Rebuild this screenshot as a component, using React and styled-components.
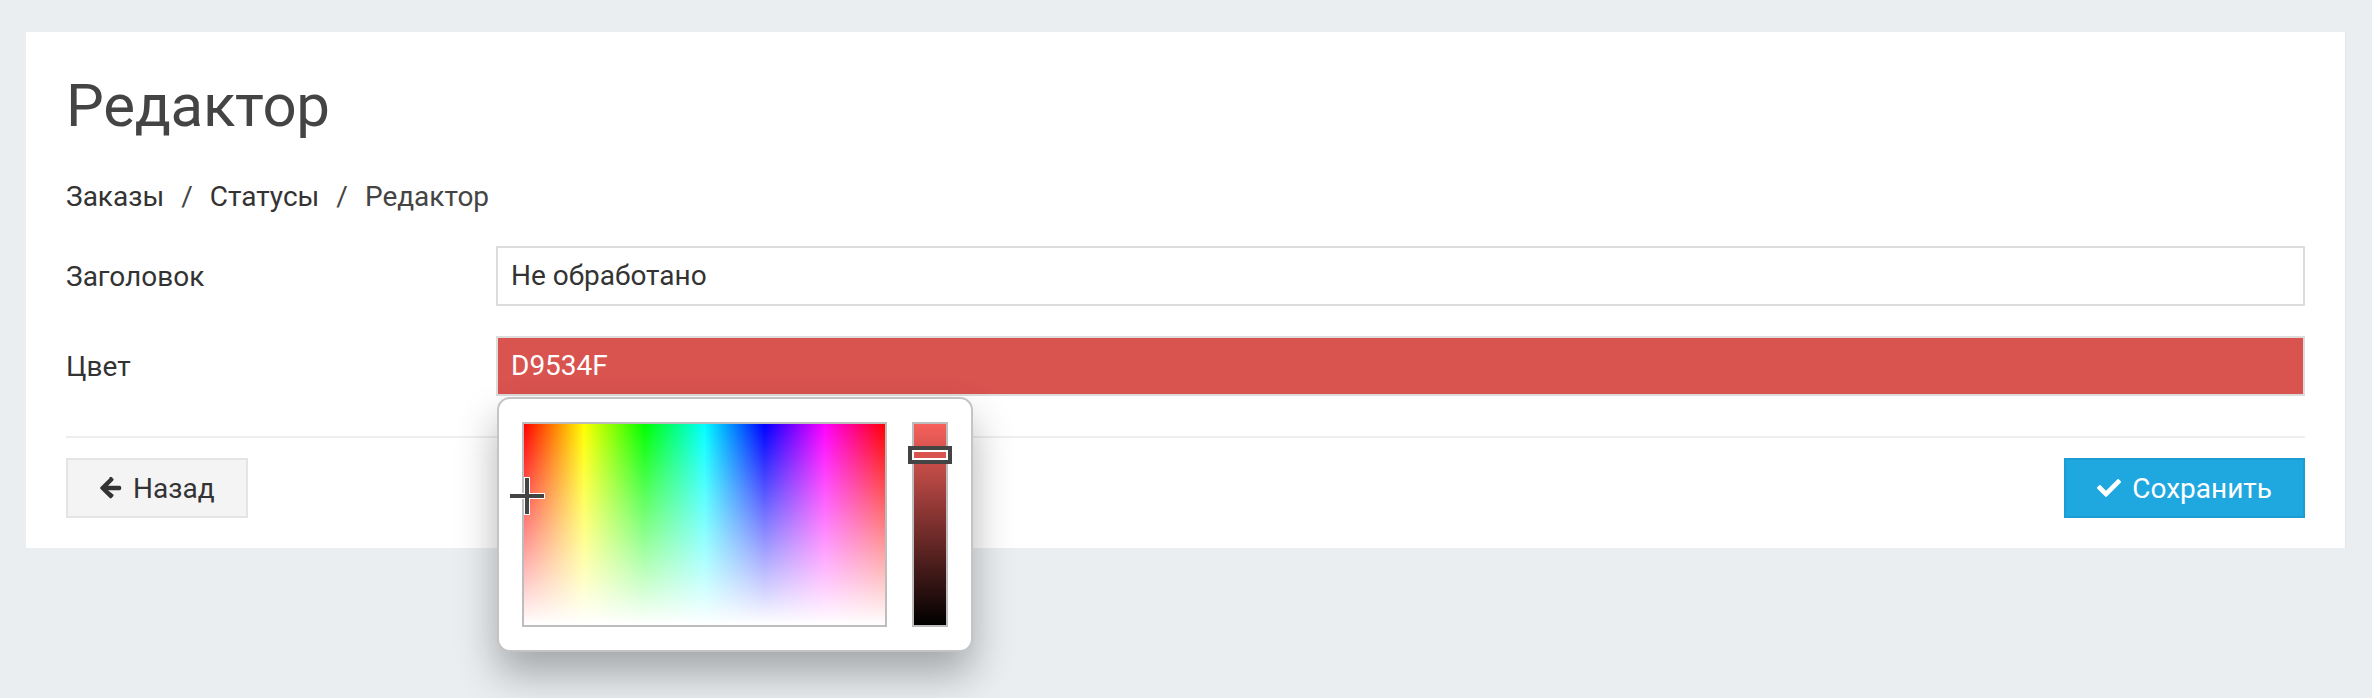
import React from "react";
import styled, { createGlobalStyle } from "styled-components";
import { FaCheck } from "react-icons/fa";

const Global = createGlobalStyle`
  html, body { margin: 0; padding: 0; background: #eaeef1; }
  body { font-family: Roboto, "Liberation Sans", Arial, sans-serif; color: #333; }
  * { box-sizing: border-box; }
`;

const Page = styled.div`
  min-height: 698px;
  padding: 32px 26px 0 26px;
`;

const Panel = styled.div`
  background: #fff;
  padding: 41px 40px 30px 40px;
  border-right: 1px solid #e3e6e9;
`;

const Title = styled.h1`
  margin: 0;
  font-size: 60px;
  line-height: 66px;
  font-weight: 400;
  color: #444;
  letter-spacing: -0.3px;
`;

const Crumbs = styled.nav`
  margin-top: 38px;
  display: flex;
  font-size: 28px;
  line-height: 40px;
  color: #333;
`;

const Crumb = styled.span`
  color: ${(p) => (p.$active ? "#444" : "#333")};
`;

const Sep = styled.span`
  padding: 0 17px;
  color: #444;
`;

const Form = styled.div`
  margin-top: 29px;
  display: grid;
  grid-template-columns: 430px 1fr;
  row-gap: 30px;
  align-items: center;
`;

const Label = styled.label`
  font-size: 28px;
  color: #333;
`;

const Field = styled.div`
  position: relative;
`;

const Input = styled.div`
  height: 60px;
  border: 2px solid #dcdcdc;
  background: ${(p) => p.$bg || "#fff"};
  color: ${(p) => p.$fg || "#333"};
  font-size: 28px;
  line-height: 56px;
  padding: 0 13px;
`;

const Divider = styled.hr`
  margin: 40px 0 0 0;
  border: 0;
  border-top: 2px solid #eee;
`;

const Actions = styled.div`
  margin-top: 20px;
  display: flex;
  justify-content: space-between;
`;

const Button = styled.button`
  height: 60px;
  padding: 0 31px;
  display: inline-flex;
  align-items: center;
  gap: 11px;
  font-family: inherit;
  font-size: 28px;
  border: 2px solid ${(p) => (p.$primary ? "#1b9dd4" : "#e4e4e4")};
  background: ${(p) => (p.$primary ? "#1fa8e0" : "#f4f4f4")};
  color: ${(p) => (p.$primary ? "#fff" : "#333")};
  cursor: pointer;
  svg { flex: none; }
`;

const Popup = styled.div`
  position: absolute;
  top: 61px;
  left: 1px;
  width: 476px;
  height: 255px;
  background: #fff;
  border: 2px solid #c4c4c4;
  border-radius: 13px;
  box-shadow: 0 22px 40px rgba(0, 0, 0, 0.3);
  padding: 23px;
  display: flex;
  gap: 25px;
  z-index: 10;
`;

const Spectrum = styled.div`
  position: relative;
  width: 365px;
  height: 205px;
  border: 2px solid #bdbdbd;
  background:
    linear-gradient(to bottom, rgba(255,255,255,0), #fff),
    linear-gradient(to right, #f00 0%, #ff0 16.66%, #0f0 33.33%, #0ff 50%, #00f 66.66%, #f0f 83.33%, #f00 100%);
`;

const Cross = styled.svg`
  position: absolute;
  left: -16px;
  top: 52px;
  overflow: visible;
`;

const Value = styled.div`
  position: relative;
  width: 36px;
  height: 205px;
  border: 2px solid #bdbdbd;
  background: linear-gradient(to bottom, #f7605b, #000);
`;

const Handle = styled.div`
  position: absolute;
  left: -6px;
  top: 22px;
  width: 44px;
  height: 18px;
  border: 4px solid #444;
  background: #d9534f;
  box-shadow: inset 0 0 0 2px #fff;
`;

const ArrowLeft = () => (
  <svg width="23" height="22" viewBox="0 0 23 22">
    <path
      d="M10.5 1.2 L1.6 10 a1.4 1.4 0 0 0 0 2 L10.5 20.8 a1.6 1.6 0 0 0 2.3 0 l1.2 -1.2 a1.6 1.6 0 0 0 0 -2.3 L9 13.2 H20.5 a1.7 1.7 0 0 0 1.7 -1.7 V10.5 a1.7 1.7 0 0 0 -1.7 -1.7 H9 L14 3.7 a1.6 1.6 0 0 0 0 -2.3 l-1.2 -1.2 a1.6 1.6 0 0 0 -2.3 0 Z"
      fill="#333"
    />
  </svg>
);

export default function App() {
  return (
    <>
      <Global />
      <Page>
        <Panel>
          <Title>Редактор</Title>
          <Crumbs>
            <Crumb>Заказы</Crumb>
            <Sep>/</Sep>
            <Crumb>Статусы</Crumb>
            <Sep>/</Sep>
            <Crumb $active>Редактор</Crumb>
          </Crumbs>
          <Form>
            <Label>Заголовок</Label>
            <Field>
              <Input>Не обработано</Input>
            </Field>
            <Label>Цвет</Label>
            <Field>
              <Input $bg="#d9534f" $fg="#fff">D9534F</Input>
              <Popup>
                <Spectrum>
                  <Cross width="38" height="40" viewBox="0 0 38 40">
                    <path d="M19 1 V39 M1 20 H37" stroke="#fff" strokeWidth="6" fill="none" />
                    <path d="M19 2 V38 M2 20 H36" stroke="#444" strokeWidth="4" fill="none" />
                  </Cross>
                </Spectrum>
                <Value>
                  <Handle />
                </Value>
              </Popup>
            </Field>
          </Form>
          <Divider />
          <Actions>
            <Button>
              <ArrowLeft />
              Назад
            </Button>
            <Button $primary>
              <FaCheck size={24} />
              Сохранить
            </Button>
          </Actions>
        </Panel>
      </Page>
    </>
  );
}
